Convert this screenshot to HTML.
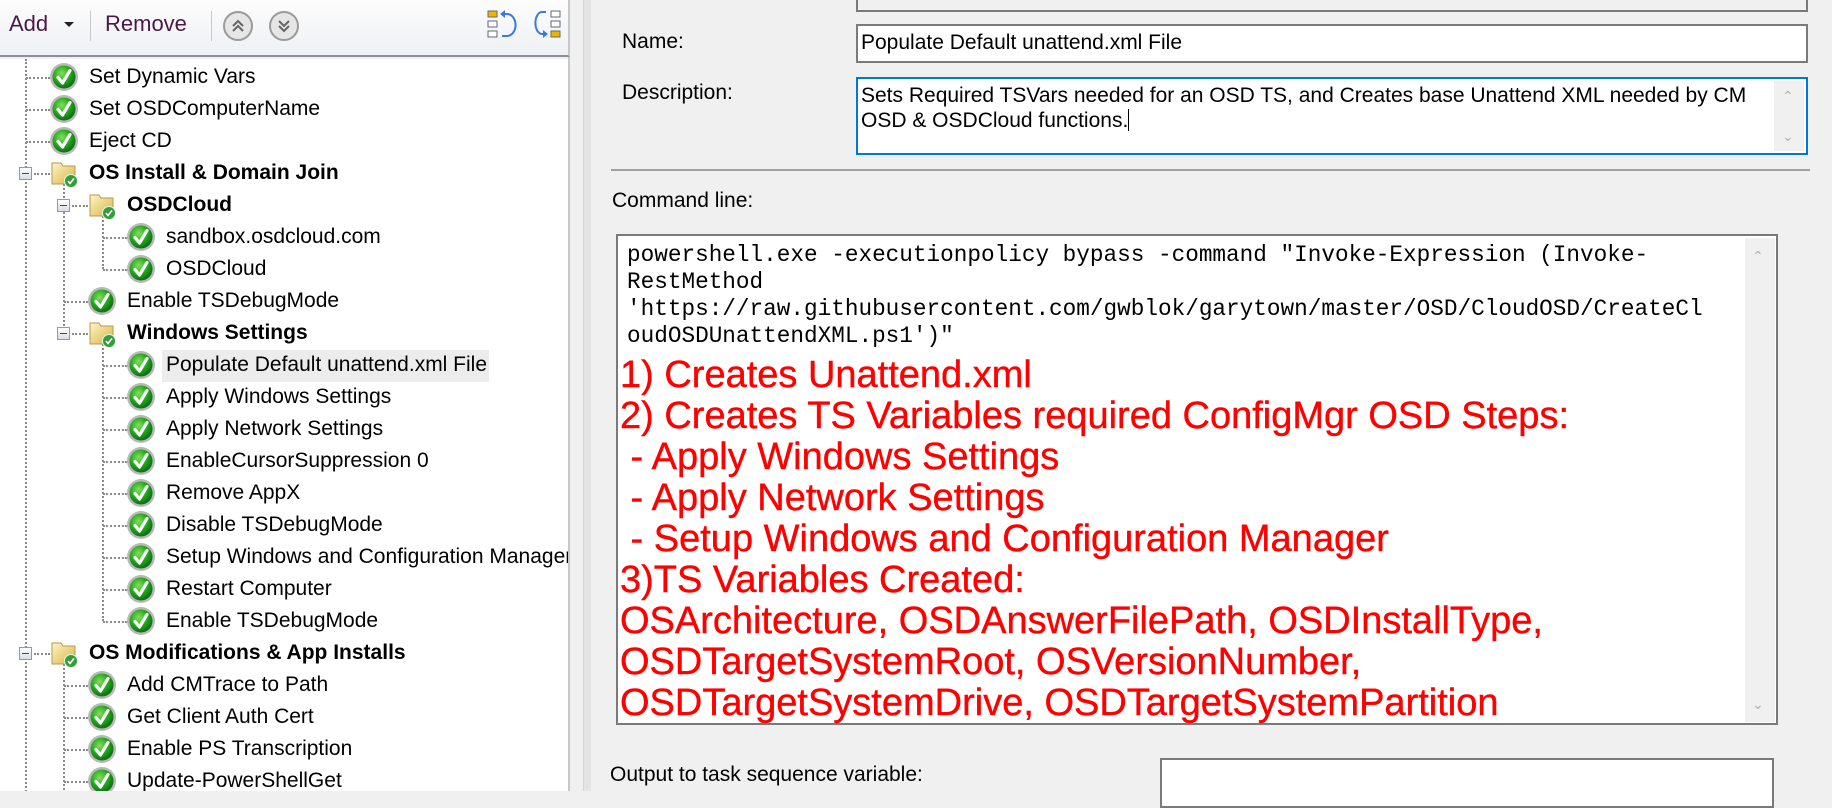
<!DOCTYPE html>
<html><head><meta charset="utf-8">
<style>
*{margin:0;padding:0;box-sizing:border-box}
body{width:1832px;height:791px;overflow:hidden;background:#f0f0f0;font-family:"Liberation Sans",sans-serif;position:relative;color:#000}
.abs{position:absolute}
#tb{left:0;top:0;width:570px;height:57px;background:linear-gradient(#fdfdfd,#eef0f3);border-bottom:2px solid #8c9096;border-right:2px solid #c8c8c8}
#tree{left:0;top:59px;width:568px;height:732px;background:#fff;overflow:hidden}
.row{position:absolute;height:32px;line-height:32px;font-size:21px;white-space:nowrap}
.row svg{position:absolute;top:1px}
.row span{position:absolute;top:0}
.b{font-weight:bold}
.vl{position:absolute;width:0;border-left:2px dotted #8a8a8a}
.hl{position:absolute;height:0;border-top:2px dotted #8a8a8a}
.box{position:absolute;width:13px;height:13px;border:1px solid #8e9aa8;background:linear-gradient(#fff,#d8dde6)}
.box:after{content:"";position:absolute;left:2px;top:5px;width:7px;height:1px;background:#2c4a7a}
.lbl{font-size:21px;position:absolute}
.inp{position:absolute;background:#fff;border:2px solid #7a7a7a}
.mono{font-family:"Liberation Mono",monospace;font-size:22.7px;line-height:27px;white-space:pre;color:#000}
.red{font-family:"Liberation Sans",sans-serif;font-size:38px;line-height:41px;white-space:pre;color:#f00;-webkit-text-stroke:0.4px #f00}
</style></head><body>
<svg width="0" height="0" style="position:absolute">
<defs>
<radialGradient id="gg" cx="40%" cy="35%" r="65%"><stop offset="0" stop-color="#7fe25a"/><stop offset="0.6" stop-color="#22a51c"/><stop offset="1" stop-color="#0d6e10"/></radialGradient>
<symbol id="ck" viewBox="0 0 30 30"><circle cx="15" cy="15" r="14" fill="#b8b8b8"/><circle cx="15" cy="15" r="11.5" fill="url(#gg)"/><path d="M9 15.5 L13.5 21 L21 8.5" fill="none" stroke="#fff" stroke-width="3.2" stroke-linecap="round" stroke-linejoin="round"/></symbol>
<linearGradient id="fy" x1="0" y1="0" x2="1" y2="1"><stop offset="0" stop-color="#fff4c4"/><stop offset="1" stop-color="#d9b54a"/></linearGradient>
<symbol id="fd" viewBox="0 0 30 30"><path d="M3 5 h9 l2 3 h12 v18 h-23z" fill="url(#fy)" stroke="#b59a4a" stroke-width="1"/><circle cx="22" cy="23" r="6.5" fill="#3a9a3a" stroke="#cfe" stroke-width="1"/><path d="M19 23 l2 2.5 l4 -5" fill="none" stroke="#fff" stroke-width="1.6"/></symbol>
</defs></svg>

<div id="tb" class="abs">
  <div class="abs" style="left:9px;top:11px;font-size:22px;color:#4a1848">Add</div>
  <div class="abs" style="left:64px;top:22px;width:0;height:0;border-left:5px solid transparent;border-right:5px solid transparent;border-top:5px solid #222"></div>
  <div class="abs" style="left:90px;top:11px;width:1px;height:30px;background:#c8c8c8"></div>
  <div class="abs" style="left:105px;top:11px;font-size:22px;color:#4a1848">Remove</div>
  <div class="abs" style="left:211px;top:11px;width:1px;height:30px;background:#c8c8c8"></div>
  <svg class="abs" style="left:222px;top:10px" width="32" height="32" viewBox="0 0 32 32"><circle cx="16" cy="16" r="14" fill="#e6e6e6" stroke="#9a9a9a" stroke-width="2"/><path d="M11 16 l5-5 l5 5 M11 21 l5-5 l5 5" fill="none" stroke="#666" stroke-width="2"/></svg>
  <svg class="abs" style="left:268px;top:10px" width="32" height="32" viewBox="0 0 32 32"><circle cx="16" cy="16" r="14" fill="#e6e6e6" stroke="#9a9a9a" stroke-width="2"/><path d="M11 11 l5 5 l5-5 M11 16 l5 5 l5-5" fill="none" stroke="#666" stroke-width="2"/></svg>
  <svg class="abs" style="left:486px;top:8px" width="34" height="32" viewBox="0 0 34 32"><rect x="2" y="3" width="9" height="6" fill="#f0b400" stroke="#667" /><rect x="2" y="13" width="9" height="6" fill="#fff" stroke="#667"/><rect x="2" y="23" width="9" height="6" fill="#fff" stroke="#667"/><path d="M16 6 h5 a7 9 0 0 1 0 22 h-5" fill="none" stroke="#3a7ae0" stroke-width="2"/><path d="M14 6 l5-4 v8z" fill="#3a7ae0"/></svg>
  <svg class="abs" style="left:530px;top:8px" width="34" height="32" viewBox="0 0 34 32"><path d="M16 4 h-4 a6 10 0 0 0 0 22 h4" fill="none" stroke="#3a7ae0" stroke-width="2"/><path d="M18 26 l-5-4 v8z" fill="#3a7ae0"/><rect x="21" y="3" width="9" height="6" fill="#fff" stroke="#667"/><rect x="21" y="13" width="9" height="6" fill="#fff" stroke="#667"/><rect x="21" y="23" width="9" height="6" fill="#f0b400" stroke="#667"/></svg>
</div>
<div class="abs" style="left:583px;top:0;width:8px;height:791px;background:#e4e4e4;border-left:1px solid #d6d6d6"></div>

<div id="tree" class="abs">
<div class="vl" style="left:25px;top:0;height:740px"></div>
<div class="vl" style="left:63px;top:114px;height:160px"></div>
<div class="vl" style="left:63px;top:594px;height:140px"></div>
<div class="vl" style="left:102px;top:146px;height:64px"></div>
<div class="vl" style="left:102px;top:274px;height:288px"></div>
<div class="hl" style="left:26px;top:18px;width:24px"></div>
<div class="hl" style="left:26px;top:50px;width:24px"></div>
<div class="hl" style="left:26px;top:82px;width:24px"></div>
<div class="hl" style="left:34px;top:114px;width:16px"></div>
<div class="hl" style="left:72px;top:146px;width:16px"></div>
<div class="hl" style="left:103px;top:178px;width:24px"></div>
<div class="hl" style="left:103px;top:210px;width:24px"></div>
<div class="hl" style="left:64px;top:242px;width:24px"></div>
<div class="hl" style="left:72px;top:274px;width:16px"></div>
<div class="hl" style="left:103px;top:306px;width:24px"></div>
<div class="hl" style="left:103px;top:338px;width:24px"></div>
<div class="hl" style="left:103px;top:370px;width:24px"></div>
<div class="hl" style="left:103px;top:402px;width:24px"></div>
<div class="hl" style="left:103px;top:434px;width:24px"></div>
<div class="hl" style="left:103px;top:466px;width:24px"></div>
<div class="hl" style="left:103px;top:498px;width:24px"></div>
<div class="hl" style="left:103px;top:530px;width:24px"></div>
<div class="hl" style="left:103px;top:562px;width:24px"></div>
<div class="hl" style="left:34px;top:594px;width:16px"></div>
<div class="hl" style="left:64px;top:626px;width:24px"></div>
<div class="hl" style="left:64px;top:658px;width:24px"></div>
<div class="hl" style="left:64px;top:690px;width:24px"></div>
<div class="hl" style="left:64px;top:722px;width:24px"></div>
<div class="box" style="left:19px;top:108px"></div>
<div class="box" style="left:57px;top:140px"></div>
<div class="box" style="left:57px;top:268px"></div>
<div class="box" style="left:19px;top:588px"></div>
<div class="abs" style="left:162px;top:291px;width:327px;height:32px;background:#ececec"></div>
<div class="row" style="top:2px;left:49px"><svg width="30" height="30"><use href="#ck"/></svg><span style="left:40px">Set Dynamic Vars</span></div>
<div class="row" style="top:34px;left:49px"><svg width="30" height="30"><use href="#ck"/></svg><span style="left:40px">Set OSDComputerName</span></div>
<div class="row" style="top:66px;left:49px"><svg width="30" height="30"><use href="#ck"/></svg><span style="left:40px">Eject CD</span></div>
<div class="row b" style="top:98px;left:49px"><svg width="30" height="30"><use href="#fd"/></svg><span style="left:40px">OS Install &amp; Domain Join</span></div>
<div class="row b" style="top:130px;left:87px"><svg width="30" height="30"><use href="#fd"/></svg><span style="left:40px">OSDCloud</span></div>
<div class="row" style="top:162px;left:126px"><svg width="30" height="30"><use href="#ck"/></svg><span style="left:40px">sandbox.osdcloud.com</span></div>
<div class="row" style="top:194px;left:126px"><svg width="30" height="30"><use href="#ck"/></svg><span style="left:40px">OSDCloud</span></div>
<div class="row" style="top:226px;left:87px"><svg width="30" height="30"><use href="#ck"/></svg><span style="left:40px">Enable TSDebugMode</span></div>
<div class="row b" style="top:258px;left:87px"><svg width="30" height="30"><use href="#fd"/></svg><span style="left:40px">Windows Settings</span></div>
<div class="row" style="top:290px;left:126px"><svg width="30" height="30"><use href="#ck"/></svg><span style="left:40px">Populate Default unattend.xml File</span></div>
<div class="row" style="top:322px;left:126px"><svg width="30" height="30"><use href="#ck"/></svg><span style="left:40px">Apply Windows Settings</span></div>
<div class="row" style="top:354px;left:126px"><svg width="30" height="30"><use href="#ck"/></svg><span style="left:40px">Apply Network Settings</span></div>
<div class="row" style="top:386px;left:126px"><svg width="30" height="30"><use href="#ck"/></svg><span style="left:40px">EnableCursorSuppression 0</span></div>
<div class="row" style="top:418px;left:126px"><svg width="30" height="30"><use href="#ck"/></svg><span style="left:40px">Remove AppX</span></div>
<div class="row" style="top:450px;left:126px"><svg width="30" height="30"><use href="#ck"/></svg><span style="left:40px">Disable TSDebugMode</span></div>
<div class="row" style="top:482px;left:126px"><svg width="30" height="30"><use href="#ck"/></svg><span style="left:40px">Setup Windows and Configuration Manager</span></div>
<div class="row" style="top:514px;left:126px"><svg width="30" height="30"><use href="#ck"/></svg><span style="left:40px">Restart Computer</span></div>
<div class="row" style="top:546px;left:126px"><svg width="30" height="30"><use href="#ck"/></svg><span style="left:40px">Enable TSDebugMode</span></div>
<div class="row b" style="top:578px;left:49px"><svg width="30" height="30"><use href="#fd"/></svg><span style="left:40px">OS Modifications &amp; App Installs</span></div>
<div class="row" style="top:610px;left:87px"><svg width="30" height="30"><use href="#ck"/></svg><span style="left:40px">Add CMTrace to Path</span></div>
<div class="row" style="top:642px;left:87px"><svg width="30" height="30"><use href="#ck"/></svg><span style="left:40px">Get Client Auth Cert</span></div>
<div class="row" style="top:674px;left:87px"><svg width="30" height="30"><use href="#ck"/></svg><span style="left:40px">Enable PS Transcription</span></div>
<div class="row" style="top:706px;left:87px"><svg width="30" height="30"><use href="#ck"/></svg><span style="left:40px">Update-PowerShellGet</span></div>
</div>
<div class="abs" style="left:568px;top:57px;width:2px;height:734px;background:#c8c8c8"></div>

<div class="inp" style="left:856px;top:-10px;width:952px;height:22px;background:#f0f0f0"></div>
<div class="lbl" style="left:622px;top:30px">Name:</div>
<div class="inp" style="left:856px;top:24px;width:952px;height:39px"></div>
<div class="abs" style="left:861px;top:31px;font-size:21px;white-space:nowrap">Populate Default unattend.xml File</div>
<div class="lbl" style="left:622px;top:81px">Description:</div>
<div class="inp" style="left:856px;top:77px;width:952px;height:78px;border-color:#0078d7"></div>
<div class="abs" style="left:861px;top:83px;font-size:21px;line-height:25px;white-space:nowrap">Sets Required TSVars needed for an OSD TS, and Creates base Unattend XML needed by CM<br>OSD &amp; OSDCloud functions.<span style="display:inline-block;width:1px;height:22px;background:#000;vertical-align:-4px"></span></div>
<div class="abs" style="left:1774px;top:81px;width:30px;height:70px;background:#f0f0f0"></div>
<div class="abs" style="left:1782px;top:88px;color:#b0b0b0;font-size:14px">&#8963;</div>
<div class="abs" style="left:1782px;top:128px;color:#b0b0b0;font-size:14px">&#8964;</div>
<div class="abs" style="left:611px;top:169px;width:1199px;height:2px;background:#a0a0a0"></div>
<div class="lbl" style="left:612px;top:189px">Command line:</div>
<div class="inp" style="left:616px;top:234px;width:1162px;height:491px"></div>
<div class="abs" style="left:1745px;top:238px;width:30px;height:484px;background:#f0f0f0"></div>
<div class="abs" style="left:1752px;top:248px;color:#b0b0b0;font-size:14px">&#8963;</div>
<div class="abs" style="left:1752px;top:696px;color:#b0b0b0;font-size:14px">&#8964;</div>
<div class="abs mono" style="left:627px;top:242px">powershell.exe -executionpolicy bypass -command "Invoke-Expression (Invoke-
RestMethod
'https://raw.githubusercontent.com/gwblok/garytown/master/OSD/CloudOSD/CreateCl
oudOSDUnattendXML.ps1')"</div>
<div class="abs red" style="left:620px;top:355px">1) Creates Unattend.xml
2) Creates TS Variables required ConfigMgr OSD Steps:
 - Apply Windows Settings
 - Apply Network Settings
 - Setup Windows and Configuration Manager
3)TS Variables Created:
OSArchitecture, OSDAnswerFilePath, OSDInstallType,
OSDTargetSystemRoot, OSVersionNumber,
OSDTargetSystemDrive, OSDTargetSystemPartition</div>
<div class="lbl" style="left:610px;top:763px">Output to task sequence variable:</div>
<div class="inp" style="left:1160px;top:758px;width:614px;height:50px"></div>
</body></html>
